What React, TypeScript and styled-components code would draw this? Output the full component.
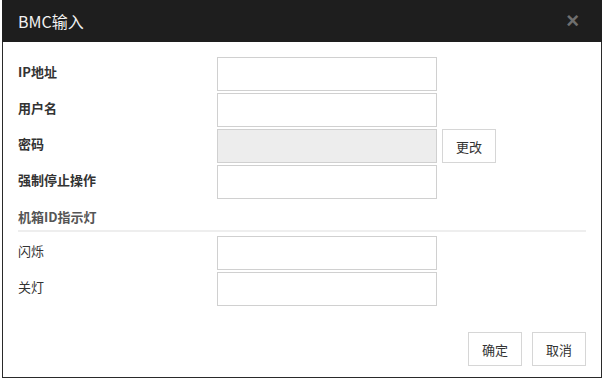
import { createGlobalStyle, styled } from "styled-components";

const GlobalStyle = createGlobalStyle`
  html, body {
    margin: 0;
    padding: 0;
    background: #ffffff;
  }
  body {
    font-family: "Noto Sans CJK SC", "Liberation Sans", sans-serif;
    font-size: 13px;
    color: #333;
  }
`;

interface FieldRow {
  label: string;
  bold?: boolean;
  disabled?: boolean;
  action?: string;
}

const mainFields: FieldRow[] = [
  { label: "IP地址", bold: true },
  { label: "用户名", bold: true },
  { label: "密码", bold: true, disabled: true, action: "更改" },
  { label: "强制停止操作", bold: true },
];

const ledFields: FieldRow[] = [{ label: "闪烁" }, { label: "关灯" }];

const App = () => {
  return (
    <>
      <GlobalStyle />
      <Dialog>
        <Header>
          <Title>BMC输入</Title>
          <CloseButton>×</CloseButton>
        </Header>
        <Body>
          <Form>
            {mainFields.map((f) => (
              <Row key={f.label}>
                <Label $bold={f.bold}>{f.label}</Label>
                <Input disabled={f.disabled} $disabled={f.disabled} />
                {f.action && <SmallButton>{f.action}</SmallButton>}
              </Row>
            ))}
          </Form>
          <SectionTitle>机箱ID指示灯</SectionTitle>
          <Form>
            {ledFields.map((f) => (
              <Row key={f.label}>
                <Label $bold={f.bold}>{f.label}</Label>
                <Input />
              </Row>
            ))}
          </Form>
        </Body>
        <Footer>
          <SmallButton>确定</SmallButton>
          <SmallButton>取消</SmallButton>
        </Footer>
      </Dialog>
    </>
  );
};

export default App;

const Dialog = styled.div`
  margin-left: 2px;
  width: 600px;
  height: 378px;
  box-sizing: border-box;
  border: 1px solid #2a2a2a;
  border-top: none;
  display: flex;
  flex-direction: column;
  background: #fff;
`;

const Header = styled.div`
  height: 42px;
  margin: 0 -1px;
  background: #1e1e1e;
  display: flex;
  align-items: center;
  justify-content: space-between;
  padding: 0 23px 0 16px;
  box-sizing: border-box;
`;

const Title = styled.div`
  color: #f2f2f2;
  font-size: 16px;
  line-height: 20px;
  font-family: "Noto Sans CJK SC", "Liberation Sans", sans-serif;
`;

const CloseButton = styled.div`
  color: #6f6f6f;
  font-size: 22px;
  font-weight: bold;
  line-height: 20px;
  font-family: "Liberation Sans", sans-serif;
`;

const Body = styled.div`
  flex: 1;
  padding: 15px 15px 0 15px;
`;

const Form = styled.div`
  display: flex;
  flex-direction: column;
  gap: 2px;
`;

const Row = styled.div`
  display: grid;
  grid-template-columns: 194px 220px auto;
  align-items: center;
  column-gap: 5px;
  height: 34px;
`;

const Label = styled.div<{ $bold?: boolean }>`
  font-weight: ${({ $bold }) => ($bold ? "bold" : "normal")};
  color: #333;
  line-height: 18px;
  margin-top: -4px;
`;

const Input = styled.input<{ $disabled?: boolean }>`
  width: 220px;
  height: 34px;
  box-sizing: border-box;
  border: 1px solid #d0d0d0;
  background: ${({ $disabled }) => ($disabled ? "#ededed" : "#fff")};
  margin: 0;
  padding: 0 6px;
  outline: none;
`;

const SmallButton = styled.button`
  width: 54px;
  height: 34px;
  box-sizing: border-box;
  border: 1px solid #d6d6d6;
  background: #fff;
  color: #333;
  font-size: 13px;
  font-family: "Noto Sans CJK SC", "Liberation Sans", sans-serif;
  padding: 0;
  cursor: pointer;
`;

const SectionTitle = styled.div`
  margin: 9px 0 4px 0;
  padding-bottom: 4px;
  border-bottom: 2px solid #eeeeee;
  font-weight: bold;
  color: #555;
  line-height: 18px;
`;

const Footer = styled.div`
  display: flex;
  justify-content: flex-end;
  gap: 10px;
  padding: 0 15px 11px 0;
`;
